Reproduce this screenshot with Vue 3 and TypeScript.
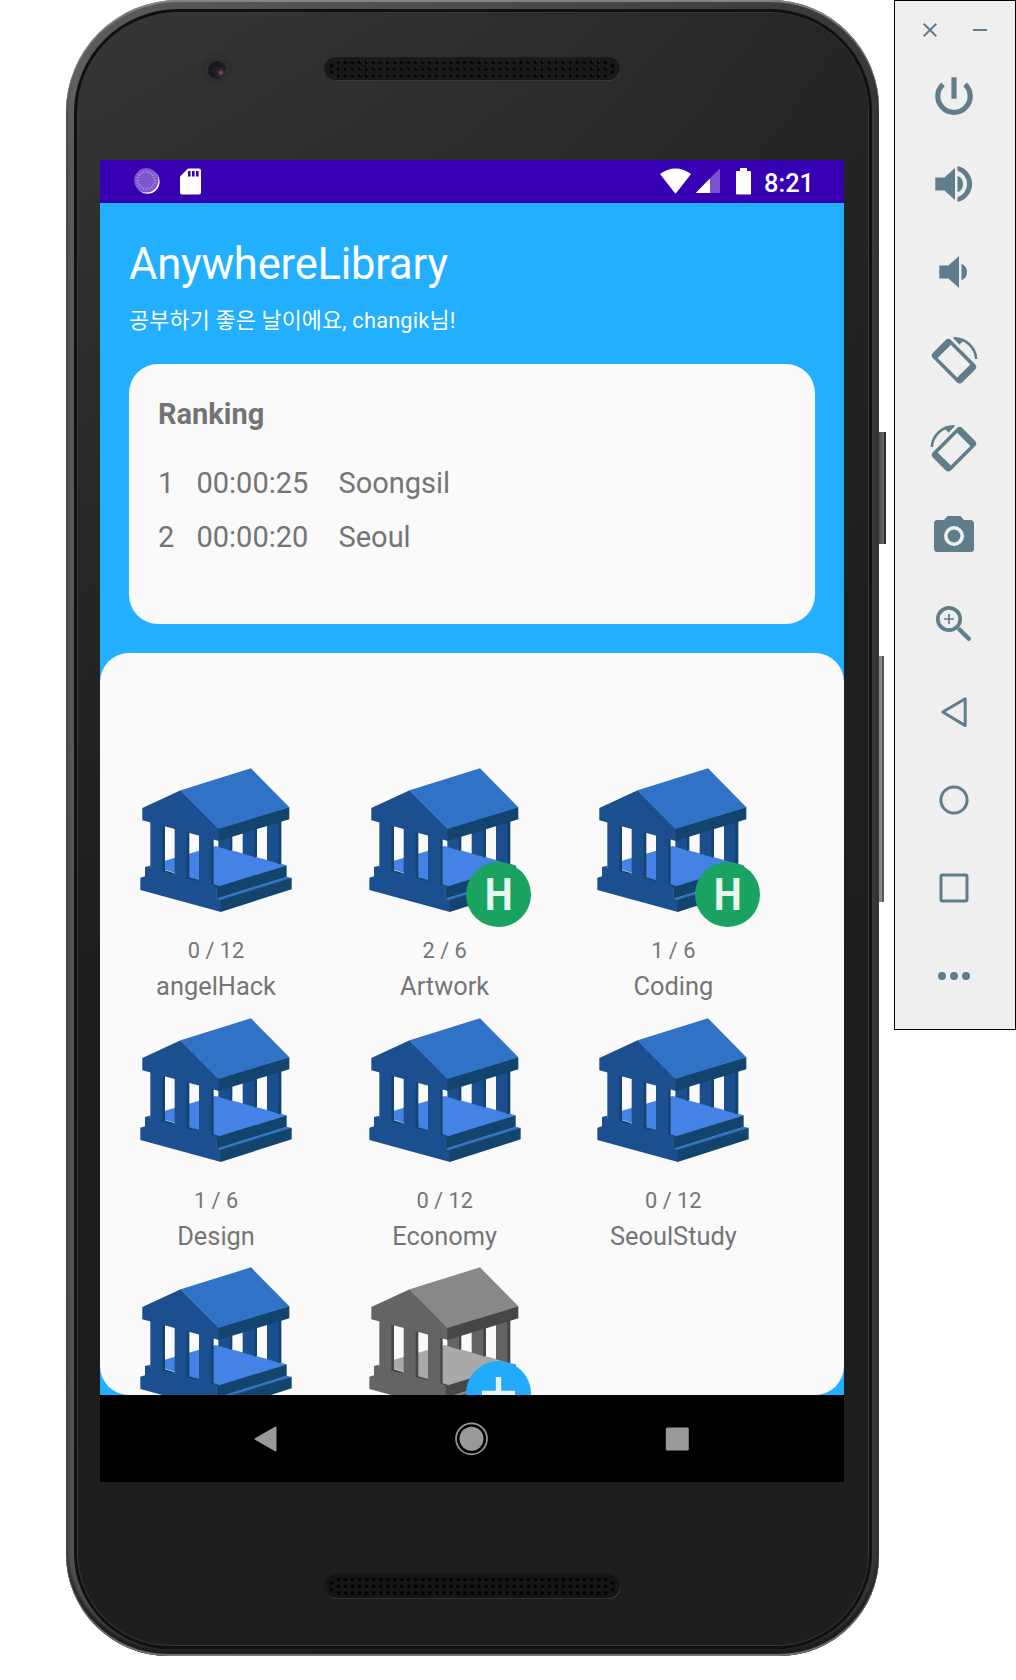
<script setup lang="ts">
interface Rank {
  place: number
  time: string
  name: string
}

interface Library {
  name: string
  used: number
  seats: number
  here?: boolean
  add?: boolean
}

const ranking: Rank[] = [
  { place: 1, time: '00:00:25', name: 'Soongsil' },
  { place: 2, time: '00:00:20', name: 'Seoul' },
]

const libraries: Library[] = [
  { name: 'angelHack', used: 0, seats: 12 },
  { name: 'Artwork', used: 2, seats: 6, here: true },
  { name: 'Coding', used: 1, seats: 6, here: true },
  { name: 'Design', used: 1, seats: 6 },
  { name: 'Economy', used: 0, seats: 12 },
  { name: 'SeoulStudy', used: 0, seats: 12 },
  { name: '', used: 0, seats: 0 },
  { name: '', used: 0, seats: 0, add: true },
]

const holes = Array.from({ length: 39 }, (_, i) => 14.5 + i * 7.03)
const rays = Array.from({ length: 20 }, (_, i) => i * 18)
</script>

<template>
  <div class="stage">
    <div class="phone">
      <span class="side-key power-key"></span>
      <span class="side-key volume-key"></span>
      <div class="glass">
        <div class="bezel top">
          <span class="camera"><i></i></span>
          <svg class="speaker" width="298" height="26" viewBox="0 0 298 26">
            <rect x="1" y="1.8" width="295.600" height="23" rx="11.500" fill="#4a4a4a" opacity=".6" />
            <rect x="0" y="1" width="296" height="23" rx="11.500" fill="#191919" />
            <g fill="#050505">
              <circle cx="7.500" cy="9.500" r="1.700" /><circle cx="7.500" cy="16" r="1.700" />
              <circle cx="288.500" cy="9.500" r="1.700" /><circle cx="288.500" cy="16" r="1.700" />
              <template v-for="x in holes" :key="x">
                <circle :cx="x" cy="6.300" r="1.700" /><circle :cx="x" cy="13" r="1.700" /><circle :cx="x" cy="19.800" r="1.700" />
              </template>
            </g>
            <g fill="#3c3c3c">
              <template v-for="x in holes" :key="x">
                <circle :cx="x + 1" cy="5.200" r=".6" /><circle :cx="x + 1" cy="11.900" r=".6" /><circle :cx="x + 1" cy="18.700" r=".6" />
              </template>
            </g>
          </svg>
        </div>

        <div class="screen">
          <div class="status">
            <svg width="26" height="26" viewBox="0 0 26 26">
              <circle cx="13.600" cy="13.800" r="12" fill="#fff" />
              <circle cx="12.300" cy="12.300" r="12.200" fill="#7d55cf" />
              <g stroke="#a98de0" stroke-width="1">
                <line v-for="a in rays" :key="a" x1="12.300" y1="2" x2="12.300" y2="5" :transform="`rotate(${a} 12.3 12.3)`" />
              </g>
            </svg>
            <svg class="sd" width="21" height="27" viewBox="0 0 21 27">
              <path d="M8 .5H19a2 2 0 0 1 2 2v22a2 2 0 0 1-2 2H2a2 2 0 0 1-2-2V8.500Z" fill="#fff" />
              <path d="M8 3h2.600v5.500H8zM12 3h2.600v5.500H12zM16 3h2.600v5.500H16z" fill="#3700b3" />
            </svg>
            <span class="grow"></span>
            <svg class="wifi" width="31" height="26" viewBox="0 0 31 26">
              <path d="M0 6C9-1.500 22-1.500 31 6L16.200 25q-.7.800-1.400 0Z" fill="#fff" />
            </svg>
            <svg class="signal" width="24" height="26" viewBox="0 0 24 26">
              <path d="M23 1.300q1-.8 1 .4V24q0 1-1 1H1q-1.400 0-.4-1Z" fill="#7a52ce" />
              <path d="M14 10.400V25H1q-1.400 0-.4-1Z" fill="#fff" />
            </svg>
            <svg class="battery" width="15" height="27" viewBox="0 0 15 27">
              <path d="M4 0h7v3h3q1 0 1 1v21.500q0 1-1 1H1q-1 0-1-1V4q0-1 1-1h3Z" fill="#fff" />
            </svg>
            <span class="clock">8:21</span>
          </div>

          <div class="app">
            <h1>AnywhereLibrary</h1>
            <p class="greeting">공부하기 좋은 날이에요, changik님!</p>
            <section class="card">
              <h2>Ranking</h2>
              <div v-for="r in ranking" :key="r.place" class="rank">
                <span>{{ r.place }}</span><span>{{ r.time }}</span><span>{{ r.name }}</span>
              </div>
            </section>
            <section class="sheet">
              <div v-for="(lib, i) in libraries" :key="i" class="library" :class="{ grey: lib.add }">
                <div class="picture">
                  <svg width="174" height="174" viewBox="27 0 522 522">
                    <path class="floor" d="M91 345 287 288 500 346 297 411 278 405Z" />
                    <path class="front" d="M295 250H333V302L295 291ZM368 235H406V322L368 311ZM441 210H478V342L441 331Z" />
                    <path class="dark" d="M330 250H337V301L330 303ZM403 235H411V321L403 323ZM475 210H484V341L475 343Z" />
                    <path class="dark" d="M122 220H135V361L164 370V376L122 366ZM195 240H208V382L237 390V396L195 386ZM270 260H281V403L297 408 289 413 270 408Z" />
                    <path class="front" d="M91 205H127V369H91ZM164 220H200V388H164ZM237 240H274V409H237Z" />
                    <path class="front" d="M61 383 75 379V351L91 347V355L126 365 164 374 199 384 237 394 274 404 290 409V444L303 449V486L61 420Z" />
                    <path class="dark" d="M289 409 297 409 500 346V381L289 447Z" />
                    <path class="roof" d="M289 446 500 380 515 384 302 451Z" />
                    <path class="dark" d="M302 449 515 383V418L302 486Z" />
                    <path class="front" d="M67 174 182 121 297 236V273L67 211Z" />
                    <path class="dark" d="M295 235 508 171V208L295 273Z" />
                    <path class="roof" d="M182 121 393 55 508 172 295 237Z" />
                  </svg>
                  <span v-if="lib.here" class="badge"><b>H</b></span>
                  <span v-if="lib.add" class="badge plus">
                    <svg width="33" height="33" viewBox="0 0 33 33"><path d="M16.500 0V33M0 16.500H33" stroke="#e8f3fa" stroke-width="5.400" /></svg>
                  </span>
                </div>
                <template v-if="lib.name">
                  <div class="count">{{ lib.used }} / {{ lib.seats }}</div>
                  <div class="name">{{ lib.name }}</div>
                </template>
              </div>
            </section>
          </div>

          <div class="nav">
            <svg width="34" height="34" viewBox="0 0 34 34"><path d="M6.500 17 26.500 5.600V28.400Z" fill="#999" stroke="#999" stroke-width="2" stroke-linejoin="round" /></svg>
            <svg width="34" height="34" viewBox="0 0 34 34"><circle cx="16.500" cy="16.800" r="15.500" fill="none" stroke="#999" stroke-width="1.700" /><circle cx="16.500" cy="16.800" r="12" fill="#999" /></svg>
            <svg width="34" height="34" viewBox="0 0 34 34"><rect x="4.800" y="5.500" width="23" height="23" rx="1.500" fill="#999" /></svg>
          </div>
        </div>

        <div class="bezel bottom">
          <svg class="speaker" width="298" height="26" viewBox="0 0 298 26">
            <rect x="1" y="1.800" width="295.600" height="23" rx="11.500" fill="#4a4a4a" opacity=".6" />
            <rect x="0" y="0" width="296" height="24" rx="12" fill="#151515" />
            <g fill="#020202">
              <circle cx="7.500" cy="9" r="1.800" /><circle cx="7.500" cy="16" r="1.800" />
              <circle cx="288.500" cy="9" r="1.800" /><circle cx="288.500" cy="16" r="1.800" />
              <template v-for="x in holes" :key="x">
                <circle :cx="x" cy="5.500" r="1.800" /><circle :cx="x" cy="12.200" r="1.800" /><circle :cx="x" cy="19" r="1.800" />
              </template>
            </g>
          </svg>
        </div>
      </div>
    </div>

    <aside class="toolbar">
      <div class="window-keys">
        <svg width="14" height="14" viewBox="0 0 14 14"><path d="M.7.700 13.300 13.300M13.300.700.7 13.300" stroke="#607d8b" stroke-width="2" /></svg>
        <svg width="14" height="14" viewBox="0 0 14 14"><path d="M0 7H14" stroke="#607d8b" stroke-width="2" /></svg>
      </div>
      <div class="tools">
        <!-- power -->
        <svg viewBox="0 0 48 48"><g class="line" stroke-width="5.200"><path d="M13 12.300A16.200 16.200 0 1 0 35 12.300" /><path d="M24 5.300V26.700" /></g></svg>
        <!-- volume up -->
        <svg viewBox="0 0 48 48"><path d="M5.300 17.500H14.400L25 8V40L14.400 30.500H5.300ZM27.500 15.700A9 9 0 0 1 27.500 32.300ZM27.500 6A18.400 18.400 0 0 1 27.500 42V37.300A14 14 0 0 0 27.500 10.700Z" /></svg>
        <!-- volume down -->
        <svg viewBox="0 0 48 48"><path d="M9.300 17.500H18.400L29 8V40L18.400 30.500H9.300ZM31.500 15.700A9 9 0 0 1 31.500 32.300Z" /></svg>
        <!-- rotate left -->
        <svg viewBox="0 0 48 48">
          <path transform="translate(24 25.2) rotate(45)" fill-rule="evenodd" d="M-16.800-12.800H16.800a4 4 0 0 1 4 4V8.800a4 4 0 0 1-4 4H-16.800a4 4 0 0 1-4-4V-8.800a4 4 0 0 1 4-4ZM-13.800-9.300V9.300H13.800V-9.300Z" />
          <path d="M22.700 1.200 29.300 8.700 32.500 5.500 30 2.400Z" /><path class="line" stroke-width="2.600" d="M24 2.400A22 22 0 0 1 46.200 23" />
        </svg>
        <!-- rotate right -->
        <svg viewBox="0 0 48 48">
          <g transform="translate(48 0) scale(-1 1)">
            <path transform="translate(24 25.2) rotate(45)" fill-rule="evenodd" d="M-16.800-12.800H16.800a4 4 0 0 1 4 4V8.800a4 4 0 0 1-4 4H-16.800a4 4 0 0 1-4-4V-8.800a4 4 0 0 1 4-4ZM-13.800-9.300V9.300H13.800V-9.300Z" />
            <path d="M22.700 1.200 29.300 8.700 32.500 5.500 30 2.400Z" /><path class="line" stroke-width="2.600" d="M24 2.400A22 22 0 0 1 46.200 23" />
          </g>
        </svg>
        <!-- screenshot -->
        <svg viewBox="0 0 48 48"><path fill-rule="evenodd" d="M17.600 4H30.400L34 8H40.500Q44 8 44 11.500V36.500Q44 40 40.500 40H7.500Q4 40 4 36.500V11.500Q4 8 7.500 8H14ZM24 14A10 10 0 1 0 24 34 10 10 0 1 0 24 14Z" /><circle cx="24" cy="24" r="6.400" /></svg>
        <!-- zoom -->
        <svg viewBox="0 0 48 48"><g class="line"><circle cx="19" cy="19" r="11.200" stroke-width="3.700" /><path d="M19 14V24M14 19H24" stroke-width="1.700" /><path d="M29.500 29.500 38.800 38.800" stroke-width="4.400" stroke-linecap="round" /></g></svg>
        <!-- back -->
        <svg viewBox="0 0 48 48"><path class="line" stroke-width="3" stroke-linejoin="round" d="M12.800 24 35.200 10.800V37.600Z" /></svg>
        <!-- home -->
        <svg viewBox="0 0 48 48"><circle class="line" stroke-width="3" cx="24" cy="24" r="13.100" /></svg>
        <!-- overview -->
        <svg viewBox="0 0 48 48"><rect class="line" stroke-width="3" x="11" y="11" width="26" height="26" rx="1.500" /></svg>
        <!-- more -->
        <svg viewBox="0 0 48 48"><circle cx="12" cy="24" r="4" /><circle cx="24" cy="24" r="4" /><circle cx="36" cy="24" r="4" /></svg>
      </div>
    </aside>
  </div>
</template>

<style>
body {
  margin: 0;
  background: #fff;
}
</style>

<style scoped>
.stage {
  width: 1016px;
  height: 1680px;
  box-sizing: border-box;
  padding-left: 66px;
  display: flex;
  align-items: flex-start;
  justify-content: space-between;
  overflow: hidden;
  background: #fff;
  font-family: Roboto, 'Noto Sans CJK KR', sans-serif;
}
.stage svg {
  display: block;
  flex: none;
}
.phone {
  position: relative;
  box-sizing: border-box;
  width: 813px;
  height: 1656px;
  padding: 13px 11px 11px 12px;
  border-radius: 112px 108px 100px 102px;
  background: linear-gradient(100deg, #6c6c6c 0, #5a5a5a 3%, #484848 45%, #3a3839 70%, #393637 100%);
  box-shadow: inset 0 2px 1px #858585, inset 0 -2px 1px #777, inset 0 -8px 4px #1b1b1b;
}
.side-key {
  position: absolute;
  box-sizing: border-box;
  left: 813px;
  background: linear-gradient(90deg, #4a4849, #6d6b6c);
  border-right: 2px solid #2c2a2b;
}
.power-key {
  top: 432px;
  width: 7px;
  height: 112px;
}
.volume-key {
  top: 656px;
  width: 5px;
  height: 246px;
  background: #8a8889;
  border-right-color: #5a5859;
}
.glass {
  height: 1632px;
  border-radius: 100px 98px 92px 92px;
  background: linear-gradient(to bottom, rgba(29, 29, 29, 0), #1d1d1d 950px), linear-gradient(105deg, #363637, #2d2d2d 40%, #1f1f1f 85%);
  box-shadow: 0 0 0 1px #383838, 0 0 0 4px #101010;
}
.bezel {
  display: flex;
}
.top {
  height: 147px;
}
.top .speaker {
  margin: 43px 0 0 92px;
}
.camera {
  width: 31px;
  height: 31px;
  margin: 41px 0 0 123px;
  border-radius: 50%;
  background: #2f2e2f;
  display: grid;
  place-items: center;
}
.camera i {
  width: 18px;
  height: 18px;
  border-radius: 50%;
  background: radial-gradient(circle at 72% 65%, #7a4a4c 0 1px, #33252c 3px, #1c1a22 7px, #151419);
}
.bottom .speaker {
  margin: 92px 0 0 246px;
}
.screen {
  width: 744px;
  height: 1322px;
  margin-left: 22px;
  background: #000;
  display: flex;
  flex-direction: column;
}
.status {
  height: 43px;
  box-sizing: border-box;
  padding: 8px 32px 0 34px;
  display: flex;
  background: #3700b3;
}
.sd {
  margin-left: 20px;
}
.grow {
  flex: 1;
}
.signal {
  margin-left: 5px;
}
.battery {
  margin-left: 16px;
}
.clock {
  width: 48px;
  margin-left: 13px;
  line-height: 30px;
  font-size: 25.400px;
  font-weight: 500;
  color: #fff;
  white-space: nowrap;
}
.app {
  height: 1192px;
  box-sizing: border-box;
  padding-top: 36px;
  display: flex;
  flex-direction: column;
  background: #22afff;
  color: #fff;
}
h1 {
  margin: 0 29px;
  font-size: 43.500px;
  line-height: 51px;
  font-weight: 400;
  letter-spacing: -.2px;
}
.greeting {
  margin: 18px 29px 30px;
  font-size: 21.750px;
  line-height: 26px;
  letter-spacing: .2px;
}
.card {
  height: 260px;
  box-sizing: border-box;
  margin: 0 29px;
  padding: 33px 29px 0;
  border-radius: 29px;
  background: #fafafa;
  color: #747474;
  font-size: 29px;
  line-height: 34px;
}
h2 {
  margin: 0 0 35px;
  font-size: 29px;
  line-height: 34px;
  font-weight: 700;
}
.rank {
  display: grid;
  grid-template-columns: 38.500px 142px 1fr;
  margin-bottom: 20px;
}
.sheet {
  flex: none;
  height: 742px;
  box-sizing: border-box;
  margin-top: 29px;
  padding: 97px 29px 0;
  border-radius: 29px;
  overflow: hidden;
  background: #fafafa;
  color: #757575;
  display: grid;
  grid-template-columns: repeat(3, 1fr);
  grid-auto-rows: 249.500px;
  align-content: start;
}
.library {
  width: 174px;
  text-align: center;
  --front: #1b4f8f;
  --roof: #2f72c6;
  --dark: #12446d;
  --floor: #4482e6;
}
.grey {
  --front: #646464;
  --roof: #888;
  --dark: #464646;
  --floor: #a9a9a9;
}
.front { fill: var(--front); }
.roof { fill: var(--roof); }
.dark { fill: var(--dark); }
.floor { fill: var(--floor); }
.picture {
  position: relative;
  height: 174px;
}
.badge {
  position: absolute;
  left: 108.300px;
  top: 111.600px;
  width: 65.400px;
  height: 65.400px;
  border-radius: 50%;
  background: #1aa260;
  color: #e8f5ee;
  font-size: 45px;
  line-height: 66px;
}
.badge b {
  display: block;
  font-weight: 700;
  transform: scaleX(.88);
}
.plus {
  display: grid;
  place-items: center;
  background: #22aafc;
}
.count {
  margin-top: 14px;
  font-size: 21.750px;
  line-height: 26px;
}
.name {
  margin-top: 7.300px;
  font-size: 25.400px;
  line-height: 30px;
}
.nav {
  height: 87px;
  box-sizing: border-box;
  padding: 0 149px;
  display: flex;
  align-items: center;
  justify-content: space-between;
}
.toolbar {
  box-sizing: border-box;
  width: 122px;
  height: 1030px;
  border: 1px solid #000;
  background: #efefef;
}
.window-keys {
  height: 14px;
  padding: 22px 28px 35px;
  display: flex;
  justify-content: space-between;
}
.tools {
  display: flex;
  flex-direction: column;
  gap: 40px;
  padding-left: 35px;
}
.tools svg {
  width: 48px;
  height: 48px;
  fill: #607d8b;
}
.line {
  fill: none;
  stroke: #607d8b;
}
</style>
